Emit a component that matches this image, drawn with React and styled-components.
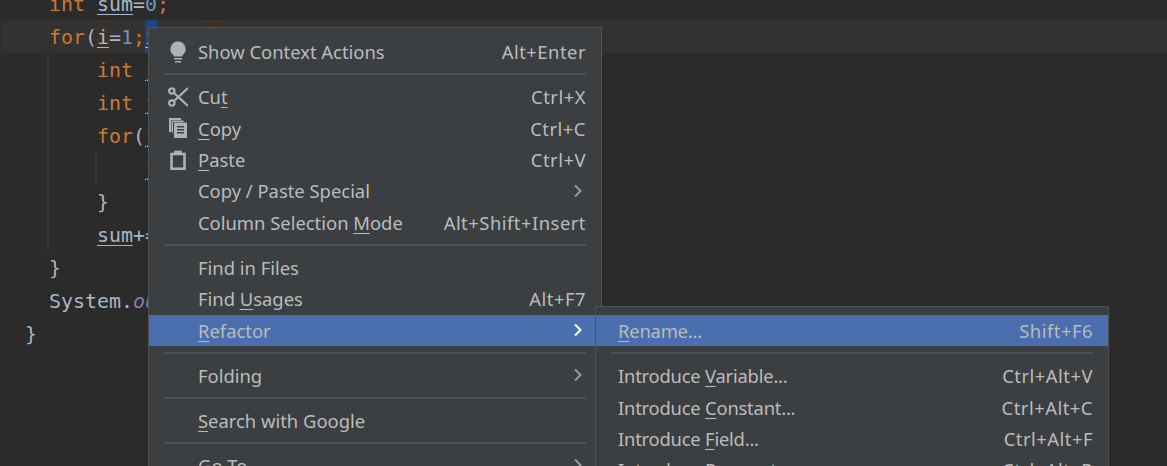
import React from 'react';
import styled, {createGlobalStyle} from 'styled-components';

const GlobalStyle = createGlobalStyle`
  html, body {
    margin: 0;
    height: 100%;
    background: #2b2b2b;
    overflow: hidden;
  }
`;

const K = styled.span`
  color: #cc7832;
`;
const N = styled.span`
  color: #6897bb;
`;
const V = styled.span`
  text-decoration: underline;
  text-decoration-thickness: 1px;
  text-underline-offset: 3px;
`;
const F = styled.span`
  color: #9876aa;
  font-style: italic;
`;

const Editor = styled.div`
  position: relative;
  width: 1167px;
  height: 466px;
  overflow: hidden;
  background: #2b2b2b;
`;

const Code = styled.div`
  margin-top: -13px;
  padding-left: 1px;
  font-family: 'DejaVu Sans Mono', 'Liberation Mono', monospace;
  font-size: 19.93px;
  color: #a9b7c6;
`;

const Line = styled.div`
  position: relative;
  height: 33px;
  line-height: 35px;
  white-space: pre;
  background: ${(props) => (props.$caret ? '#323232' : 'transparent')};
`;

const Mark = styled.span`
  position: absolute;
  top: 0;
  left: ${(props) => props.$x}px;
  width: 12px;
  height: 33px;
  background: ${(props) => props.$color};
`;

const Guide = styled.span`
  position: absolute;
  top: 0;
  left: ${(props) => props.$x}px;
  width: 2px;
  height: 33px;
  background: #373737;
`;

const LineText = styled.span`
  position: relative;
`;

const Menu = styled.div`
  position: absolute;
  left: ${(props) => props.$left}px;
  top: ${(props) => props.$top}px;
  width: ${(props) => props.$width}px;
  box-sizing: border-box;
  padding: 8px 0 0;
  background: #3c3f41;
  border: 1px solid #515151;
  font-family: 'Noto Sans', 'Open Sans', sans-serif;
  font-size: 18.4px;
  color: #bbbbbb;
`;

const Item = styled.div`
  display: flex;
  align-items: center;
  height: 31.4px;
  padding-left: ${(props) => (props.$sub ? 22 : 49)}px;
  padding-right: 15px;
  white-space: nowrap;
  background: ${(props) => (props.$active ? '#4b6eaf' : 'transparent')};

  u {
    text-decoration-thickness: 1px;
    text-underline-offset: 3px;
  }
`;

const Icon = styled.span`
  display: flex;
  align-items: center;
  justify-content: center;
  width: 20px;
  height: 22px;
  margin-left: -30px;
  margin-right: 10px;
`;

const Label = styled.span`
  flex: 1;
  letter-spacing: ${(props) => (props.$sub ? '-0.22px' : '0')};
`;

const Shortcut = styled.span`
  margin-left: 30px;
  letter-spacing: 0.5px;
`;

const Arrow = styled.svg`
  width: 10px;
  height: 14px;
  margin-right: 3px;
  fill: none;
  stroke: ${(props) => (props.$active ? '#ffffff' : '#9a9c9e')};
  stroke-width: 2;
`;

const Separator = styled.div`
  height: 2px;
  margin: 6px 15px 5.7px;
  background: #515151;
`;

const BulbIcon = () => (
  <svg width="20" height="24" viewBox="0 0 20 24" fill="#afb1b3">
    <path d="M10 1.5a7.6 7.6 0 0 0-5 13.3c.7.7 1 1.2 1 1.7h8c0-.5.3-1 1-1.7a7.6 7.6 0 0 0-5-13.3z" />
    <rect x="6" y="18" width="8" height="1.5" />
    <rect x="7" y="21" width="6" height="1.5" />
  </svg>
);

const ScissorsIcon = () => (
  <svg width="20" height="20" viewBox="0 0 20 20" fill="none" stroke="#afb1b3" strokeWidth="2.2">
    <circle cx="3.8" cy="4" r="2.7" />
    <circle cx="3.8" cy="16" r="2.7" />
    <path d="M6 6 20 19M6 14 20 1" />
  </svg>
);

const CopyIcon = () => (
  <svg width="18" height="20" viewBox="0 0 18 20" fill="#afb1b3">
    <path d="M0 0h12v2H2v12H0z" />
    <path d="M2.5 2.5h12v1.5H4v10.5H2.500z" />
    <path d="M5 4.500h13V20H5z" />
    <path d="M8 8h7v1.500H8zM8 11h7v1.500H8zM8 14h7v1.500H8z" fill="#3c3f41" />
  </svg>
);

const PasteIcon = () => (
  <svg width="16" height="20" viewBox="0 0 16 20" fill="none" stroke="#afb1b3" strokeWidth="2.6">
    <path d="M1.500 4h13v14.700h-13z" />
    <path d="M4.500 1h7v3.500h-7z" fill="#afb1b3" strokeWidth="0.8" />
  </svg>
);

const Chevron = ({active}) => (
  <Arrow viewBox="0 0 10 14" $active={active}>
    <path d="M2 1.500 7.500 7 2 12.500" />
  </Arrow>
);

const Entry = ({icon, label, shortcut, arrow, active, sub}) => (
  <Item $sub={sub} $active={active}>
    {icon && <Icon>{icon}</Icon>}
    <Label $sub={sub}>{label}</Label>
    {shortcut && <Shortcut>{shortcut}</Shortcut>}
    {arrow && <Chevron active={active} />}
  </Item>
);

const App = () => {
  return (
    <>
      <GlobalStyle />
      <Editor>
        <Code>
          <Line>
            <LineText>
              {'    '}
              <K>int</K> <V>sum</V>=<N>0</N>
              <K>;</K>
            </LineText>
          </Line>
          <Line $caret>
            <Mark $x={96} $color="#3b3128" />
            <Mark $x={144} $color="#214283" />
            <Mark $x={204} $color="#3b3128" />
            <LineText>
              {'    '}
              <K>for</K>(<V>i</V>=<N>1</N>
              <K>;</K>
              <V>i</V>
            </LineText>
          </Line>
          <Line>
            <Guide $x={46} />
            <LineText>
              {'        '}
              <K>int</K> <V>j</V>
            </LineText>
          </Line>
          <Line>
            <Guide $x={46} />
            <LineText>
              {'        '}
              <K>int</K> <V>j</V>
            </LineText>
          </Line>
          <Line>
            <Guide $x={46} />
            <LineText>
              {'        '}
              <K>for</K>(<V>j</V>
            </LineText>
          </Line>
          <Line>
            <Guide $x={46} />
            <Guide $x={94} />
            <LineText>
              {'            '}
              <V>j</V>
            </LineText>
          </Line>
          <Line>
            <Guide $x={46} />
            <LineText>{'        }'}</LineText>
          </Line>
          <Line>
            <Guide $x={46} />
            <LineText>
              {'        '}
              <V>sum</V>+=
            </LineText>
          </Line>
          <Line>
            <LineText>{'    }'}</LineText>
          </Line>
          <Line>
            <LineText>
              {'    '}System.<F>out</F>
            </LineText>
          </Line>
          <Line>
            <LineText>{'  }'}</LineText>
          </Line>
        </Code>

        <Menu $left={148} $top={27} $width={454}>
          <Entry icon={<BulbIcon />} label="Show Context Actions" shortcut="Alt+Enter" />
          <Separator />
          <Entry icon={<ScissorsIcon />} label={<>Cu<u>t</u></>} shortcut="Ctrl+X" />
          <Entry icon={<CopyIcon />} label={<><u>C</u>opy</>} shortcut="Ctrl+C" />
          <Entry icon={<PasteIcon />} label={<><u>P</u>aste</>} shortcut="Ctrl+V" />
          <Entry label="Copy / Paste Special" arrow />
          <Entry label={<>Column Selection <u>M</u>ode</>} shortcut="Alt+Shift+Insert" />
          <Separator />
          <Entry label="Find in Files" />
          <Entry label={<>Find <u>U</u>sages</>} shortcut="Alt+F7" />
          <Entry label={<><u>R</u>efactor</>} arrow active />
          <Separator />
          <Entry label="Folding" arrow />
          <Separator />
          <Entry label={<><u>S</u>earch with Google</>} />
          <Separator />
          <Entry label={<><u>G</u>o To</>} arrow />
        </Menu>

        <Menu $left={595} $top={306} $width={514}>
          <Entry sub label={<><u>R</u>ename...</>} shortcut="Shift+F6" active />
          <Separator />
          <Entry sub label={<>Introduce <u>V</u>ariable...</>} shortcut="Ctrl+Alt+V" />
          <Entry sub label={<>Introduce <u>C</u>onstant...</>} shortcut="Ctrl+Alt+C" />
          <Entry sub label={<>Introduce <u>F</u>ield...</>} shortcut="Ctrl+Alt+F" />
          <Entry sub label={<>Introduce <u>P</u>arameter...</>} shortcut="Ctrl+Alt+P" />
        </Menu>
      </Editor>
    </>
  );
};

export default App;
